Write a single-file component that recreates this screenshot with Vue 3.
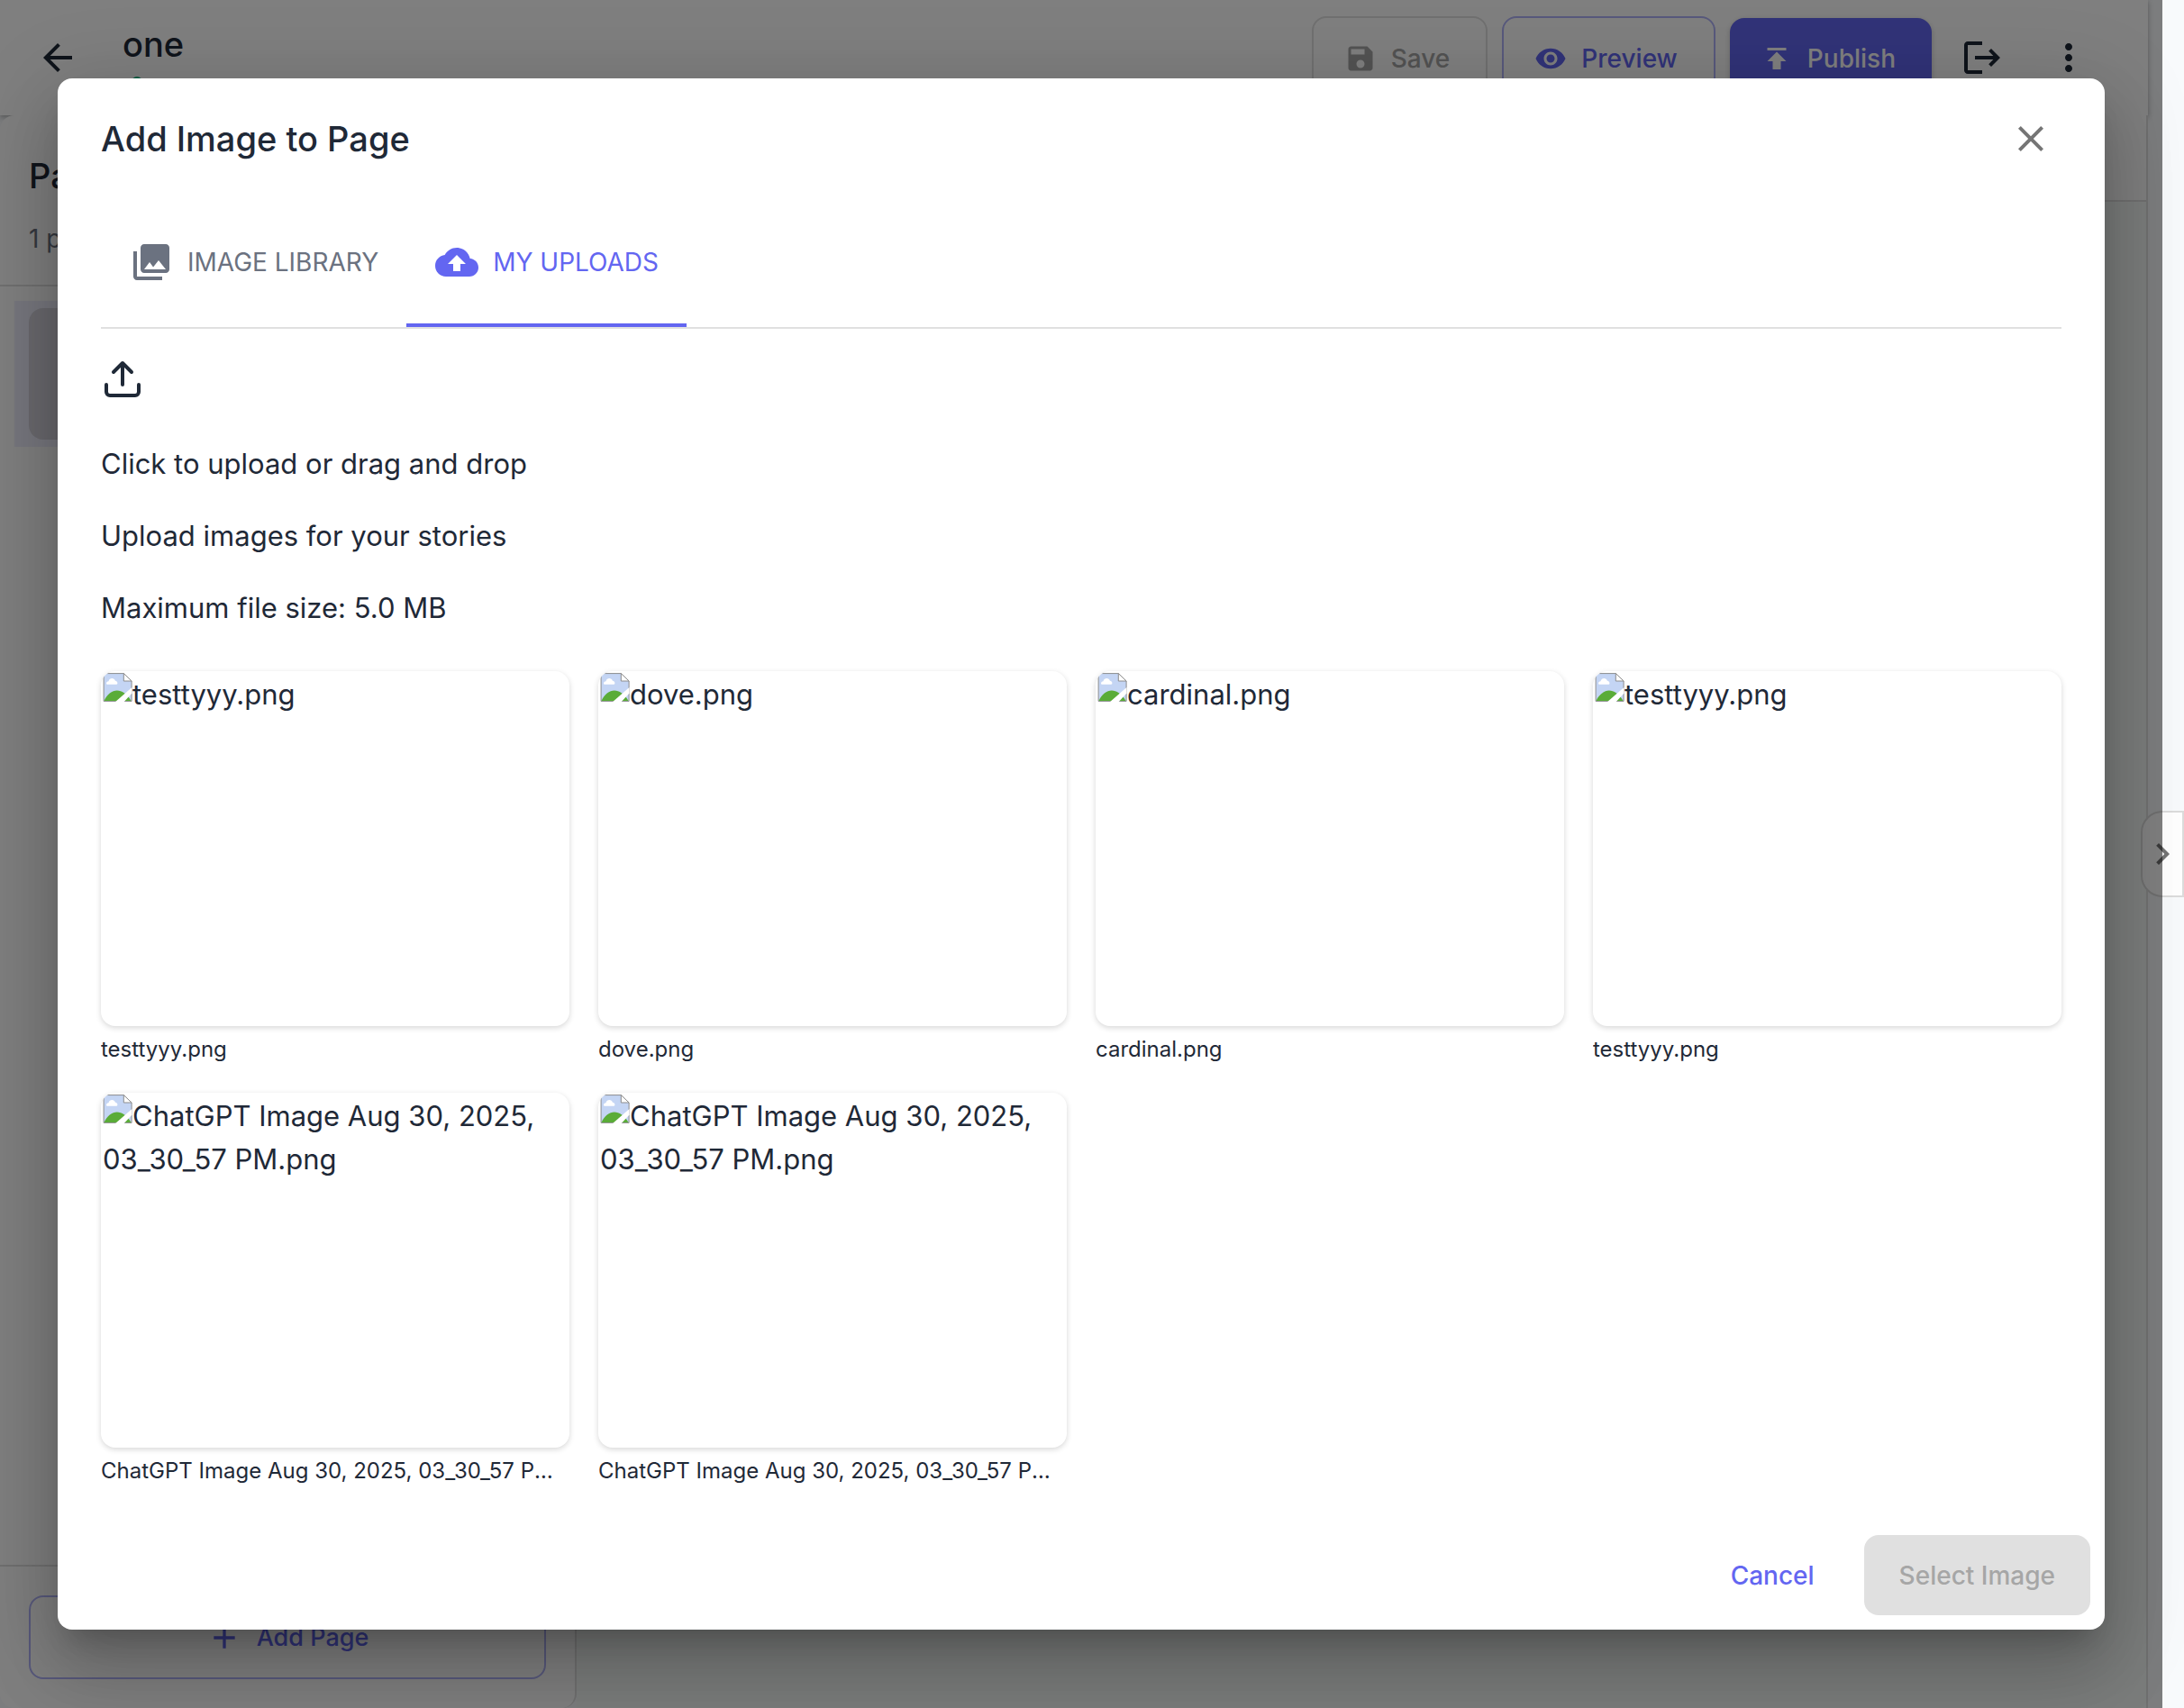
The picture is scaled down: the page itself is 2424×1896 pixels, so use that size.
<script setup>
import { ref } from 'vue'

const activeTab = ref('uploads')

const uploads = [
  { id: 1, name: 'testtyyy.png' },
  { id: 2, name: 'dove.png' },
  { id: 3, name: 'cardinal.png' },
  { id: 4, name: 'testtyyy.png' },
  { id: 5, name: 'ChatGPT Image Aug 30, 2025, 03_30_57 PM.png' },
  { id: 6, name: 'ChatGPT Image Aug 30, 2025, 03_30_57 PM.png' }
]
</script>

<template>
  <div class="page">
    <div class="editor">
      <header class="topbar">
        <button class="icon-button" aria-label="Back">
          <svg viewBox="0 0 24 24"><path d="M20 11H7.83l5.59-5.59L12 4l-8 8 8 8 1.41-1.41L7.83 13H20z" /></svg>
        </button>
        <div class="story">
          <h1 class="story-title">one</h1>
          <span class="status-dot"></span>
        </div>
        <div class="actions">
          <button class="action save" disabled>
            <svg viewBox="0 0 24 24"><path d="M17 3H5c-1.11 0-2 .9-2 2v14c0 1.1.89 2 2 2h14c1.1 0 2-.9 2-2V7zm-5 16c-1.66 0-3-1.34-3-3s1.34-3 3-3 3 1.34 3 3-1.34 3-3 3m3-10H5V5h10z" /></svg>
            Save
          </button>
          <button class="action preview">
            <svg viewBox="0 0 24 24"><path d="M12 4.5C7 4.5 2.73 7.61 1 12c1.73 4.39 6 7.5 11 7.5s9.27-3.11 11-7.5c-1.73-4.39-6-7.5-11-7.5M12 17c-2.76 0-5-2.24-5-5s2.24-5 5-5 5 2.24 5 5-2.24 5-5 5m0-8c-1.66 0-3 1.34-3 3s1.34 3 3 3 3-1.34 3-3-1.34-3-3-3" /></svg>
            Preview
          </button>
          <button class="action publish">
            <svg viewBox="0 0 24 24"><path d="M5 4v2h14V4zm0 10h4v6h6v-6h4l-7-7z" /></svg>
            Publish
          </button>
        </div>
        <button class="icon-button exit" aria-label="Exit">
          <svg viewBox="0 0 24 24"><path d="m17 7-1.41 1.41L18.17 11H8v2h10.17l-2.58 2.58L17 17l5-5zM4 5h8V3H4c-1.1 0-2 .9-2 2v14c0 1.1.9 2 2 2h8v-2H4z" /></svg>
        </button>
        <button class="icon-button more" aria-label="More">
          <svg viewBox="0 0 24 24"><path d="M12 8c1.1 0 2-.9 2-2s-.9-2-2-2-2 .9-2 2 .9 2 2 2m0 2c-1.1 0-2 .9-2 2s.9 2 2 2 2-.9 2-2-.9-2-2-2m0 6c-1.1 0-2 .9-2 2s.9 2 2 2 2-.9 2-2-.9-2-2-2" /></svg>
        </button>
      </header>

      <div class="workspace">
        <aside class="sidebar">
          <div class="sidebar-head">
            <h2>Pages</h2>
            <p>1 page</p>
          </div>
          <div class="page-list">
            <div class="page-item"><div class="page-thumb"></div></div>
          </div>
          <div class="sidebar-foot">
            <button class="add-page">
              <svg viewBox="0 0 24 24"><path d="M19 13h-6v6h-2v-6H5v-2h6V5h2v6h6z" /></svg>
              Add Page
            </button>
          </div>
        </aside>
        <main class="canvas"><div class="canvas-bar"></div></main>
      </div>
    </div>

    <button class="drawer-handle" aria-label="Open panel">
      <svg viewBox="0 0 24 24"><path d="M10 6 8.59 7.41 13.17 12l-4.58 4.59L10 18l6-6z" /></svg>
    </button>

    <div class="overlay">
      <section class="dialog" role="dialog" aria-labelledby="dialog-title">
        <div class="dialog-head">
          <h2 id="dialog-title">Add Image to Page</h2>
          <button class="icon-button close" aria-label="Close">
            <svg viewBox="0 0 24 24"><path d="M19 6.41 17.59 5 12 10.59 6.41 5 5 6.41 10.59 12 5 17.59 6.41 19 12 13.41 17.59 19 19 17.59 13.41 12z" /></svg>
          </button>
        </div>

        <div class="dialog-body">
          <div class="tabs" role="tablist">
            <button class="tab" role="tab" :class="{ active: activeTab === 'library' }" @click="activeTab = 'library'">
              <svg viewBox="0 0 24 24"><path d="M22 16V4c0-1.1-.9-2-2-2H8c-1.1 0-2 .9-2 2v12c0 1.1.9 2 2 2h12c1.1 0 2-.9 2-2m-11-4 2.03 2.71L16 11l4 5H8zM2 6v14c0 1.1.9 2 2 2h14v-2H4V6z" /></svg>
              IMAGE LIBRARY
            </button>
            <button class="tab" role="tab" :class="{ active: activeTab === 'uploads' }" @click="activeTab = 'uploads'">
              <svg viewBox="0 0 24 24"><path d="M19.35 10.04C18.67 6.59 15.64 4 12 4 9.11 4 6.6 5.64 5.35 8.04 2.34 8.36 0 10.91 0 14c0 3.31 2.69 6 6 6h13c2.76 0 5-2.24 5-5 0-2.64-2.05-4.78-4.65-4.96M14 13v4h-4v-4H7l5-5 5 5z" /></svg>
              MY UPLOADS
            </button>
          </div>

          <div class="dropzone">
            <svg viewBox="0 0 24 24" fill="none" stroke="currentColor" stroke-width="2" stroke-linecap="round" stroke-linejoin="round">
              <path d="M21 15v4a2 2 0 0 1-2 2H5a2 2 0 0 1-2-2v-4" />
              <path d="M17 8l-5-5-5 5M12 3v12" />
            </svg>
            <p>Click to upload or drag and drop</p>
            <p>Upload images for your stories</p>
            <p>Maximum file size: 5.0 MB</p>
          </div>

          <div class="grid">
            <figure v-for="file in uploads" :key="file.id" class="item">
              <div class="thumb">
                <svg class="broken" viewBox="0 0 16 16">
                  <path d="M.3 .3H11.4L15.8 4.5V15.7H.3z" fill="#c4d5f4" stroke="#8d8d8d" stroke-width=".5" />
                  <path d="M.5 15.5C2 12 5 9.8 7.7 9.8S13 11.5 15.5 15.5z" fill="#5aac38" />
                  <path d="M2.4 6.4C1.4 6.4 1.6 4.6 3 4.6 3.4 2.6 6.2 2.4 6.7 4.4 8 4.3 8.4 6.4 7.4 6.4z" fill="#fff" />
                  <path d="M11.4 .3V4.5H15.8z" fill="#fff" stroke="#8d8d8d" stroke-width=".5" />
                  <path d="M6.8 16L16 8v3.2L11.6 16z" fill="#fff" />
                </svg>{{ file.name }}
              </div>
              <figcaption>{{ file.name }}</figcaption>
            </figure>
          </div>
        </div>

        <div class="dialog-foot">
          <button class="foot-button cancel">Cancel</button>
          <button class="foot-button select" disabled>Select Image</button>
        </div>
      </section>
    </div>
  </div>
</template>

<style>
body {
  margin: 0;
  background: #f8fafc;
}
</style>

<style scoped>
.page {
  position: relative;
  min-height: 100vh;
  overflow: hidden;
  font-family: Inter, "Liberation Sans", sans-serif;
  font-size: 31px;
  line-height: 48px;
  color: #1f2937;
}

.page * {
  box-sizing: border-box;
}

h1,
h2,
p,
figure {
  margin: 0;
}

button {
  font-family: inherit;
  border: 0;
  background: none;
  padding: 0;
  color: inherit;
}

svg {
  display: block;
  flex: none;
  fill: currentColor;
}

.editor {
  display: flex;
  flex-direction: column;
  height: 100vh;
  margin-right: 40px;
}

.topbar {
  display: flex;
  align-items: center;
  height: 128px;
  padding: 0 48px 0 24px;
  background: #fff;
  box-shadow: 0 2px 6px rgba(0, 0, 0, 0.3);
}

.icon-button {
  display: flex;
  padding: 16px;
}

.icon-button svg {
  width: 48px;
  height: 48px;
}

.story {
  flex: 1;
  align-self: flex-start;
  margin-left: 32px;
  padding-top: 17px;
}

.story-title {
  font-size: 38px;
  font-weight: 500;
  line-height: 64px;
}

.status-dot {
  display: block;
  width: 12px;
  height: 12px;
  margin: 4px 10px;
  border-radius: 50%;
  background: #10b981;
}

.actions {
  display: flex;
  align-items: center;
  gap: 16px;
}

.action {
  display: flex;
  align-items: center;
  gap: 16px;
  height: 92px;
  padding: 2px 40px 0 34px;
  border: 2px solid;
  border-radius: 16px;
  font-size: 28px;
  font-weight: 500;
}

.action svg {
  width: 36px;
  height: 36px;
}

.save {
  color: #a6a6a6;
  border-color: #e0e0e0;
}

.preview {
  color: #6366f1;
  border-color: #b1b3f8;
}

.publish {
  height: 88px;
  border: 0;
  color: #fff;
  background: #6366f1;
  box-shadow: 0 2px 6px rgba(0, 0, 0, 0.2);
}

.exit {
  margin-left: 16px;
}

.more {
  margin-left: 16px;
}

.workspace {
  position: relative;
  display: flex;
  flex: 1;
  min-height: 0;
}

.sidebar {
  display: flex;
  flex-direction: column;
  width: 640px;
  background: #fff;
  border-right: 2px solid #e0e0e0;
  border-radius: 16px;
}

.sidebar-head {
  height: 190px;
  padding: 35px 32px 0;
  border-bottom: 2px solid #e0e0e0;
}

.sidebar-head h2 {
  font-size: 38px;
  font-weight: 500;
  line-height: 64px;
}

.sidebar-head p {
  margin-top: 18px;
  font-size: 28px;
  line-height: 40px;
  color: #6b7280;
}

.page-list {
  flex: 1;
  padding: 16px;
}

.page-item {
  padding: 8px 16px;
  background: #eeeefd;
}

.page-thumb {
  width: 96px;
  height: 146px;
  border-radius: 16px;
  background: #d4d3dd;
}

.sidebar-foot {
  padding: 32px 32px 32px;
  border-top: 2px solid #e0e0e0;
}

.add-page {
  display: flex;
  align-items: center;
  justify-content: center;
  gap: 16px;
  width: 100%;
  height: 93px;
  border: 2px solid #b1b3f8;
  border-radius: 16px;
  font-size: 27px;
  font-weight: 500;
  color: #6366f1;
}

.add-page svg {
  width: 40px;
  height: 40px;
}

.canvas {
  flex: 1;
  background: #f7faf8;
  border-right: 2px solid #e0e0e0;
}

.canvas-bar {
  height: 96px;
  background: #fff;
  border-bottom: 2px solid #e0e0e0;
}

.drawer-handle {
  position: absolute;
  top: 50%;
  right: 0;
  display: flex;
  align-items: center;
  width: 48px;
  height: 96px;
  margin-top: -48px;
  border: 2px solid #dcdcdc;
  border-radius: 24px 0 0 24px;
  background: #fff;
  color: #757575;
}

.drawer-handle svg {
  width: 48px;
  height: 48px;
  margin-left: -2px;
}

.overlay {
  position: absolute;
  inset: 0 24px 0 0;
  display: flex;
  align-items: center;
  padding: 64px;
  background: rgba(0, 0, 0, 0.5);
}

.dialog {
  width: 100%;
  border-radius: 16px;
  background: #fff;
  box-shadow:
    0 22px 30px -14px rgba(0, 0, 0, 0.2),
    0 48px 76px 6px rgba(0, 0, 0, 0.14),
    0 18px 92px 16px rgba(0, 0, 0, 0.12);
}

.dialog-head {
  display: flex;
  align-items: center;
  justify-content: space-between;
  height: 132px;
  padding: 1px 42px 0 48px;
}

.dialog-head h2 {
  font-size: 38px;
  font-weight: 500;
  line-height: 64px;
}

.close {
  color: #757575;
}

.dialog-body {
  padding: 0 48px;
}

.tabs {
  display: flex;
  border-bottom: 2px solid #e0e0e0;
}

.tab {
  display: flex;
  align-items: center;
  gap: 16px;
  height: 144px;
  padding: 4px 31px 0 32px;
  border-bottom: 4px solid transparent;
  font-size: 28px;
  color: #6b7280;
}

.tab svg {
  width: 48px;
  height: 48px;
}

.tab.active {
  color: #6366f1;
  border-bottom-color: #6366f1;
}

.dropzone {
  padding-top: 32px;
}

.dropzone svg {
  width: 48px;
  height: 48px;
  fill: none;
}

.dropzone p {
  margin-top: 32px;
}

.dropzone svg + p {
  margin-top: 46px;
}

.grid {
  display: grid;
  grid-template-columns: repeat(4, minmax(0, 1fr));
  gap: 28px 32px;
  margin-top: 46px;
}

.thumb {
  height: 394px;
  padding: 2px;
  overflow: hidden;
  border-radius: 16px;
  background: #fff;
  box-shadow: 0 2px 6px rgba(0, 0, 0, 0.16);
}

.broken {
  display: inline-block;
  width: 33px;
  height: 32px;
  vertical-align: top;
}

figcaption {
  margin-top: 6px;
  overflow: hidden;
  font-size: 24px;
  line-height: 40px;
  white-space: nowrap;
  text-overflow: ellipsis;
}

.dialog-foot {
  display: flex;
  justify-content: flex-end;
  gap: 16px;
  padding: 51px 16px 16px;
}

.foot-button {
  height: 89px;
  padding: 0 39px;
  border-radius: 16px;
  font-size: 28px;
  font-weight: 500;
}

.cancel {
  color: #6366f1;
}

.select {
  color: #a6a6a6;
  background: #e0e0e0;
}
</style>
